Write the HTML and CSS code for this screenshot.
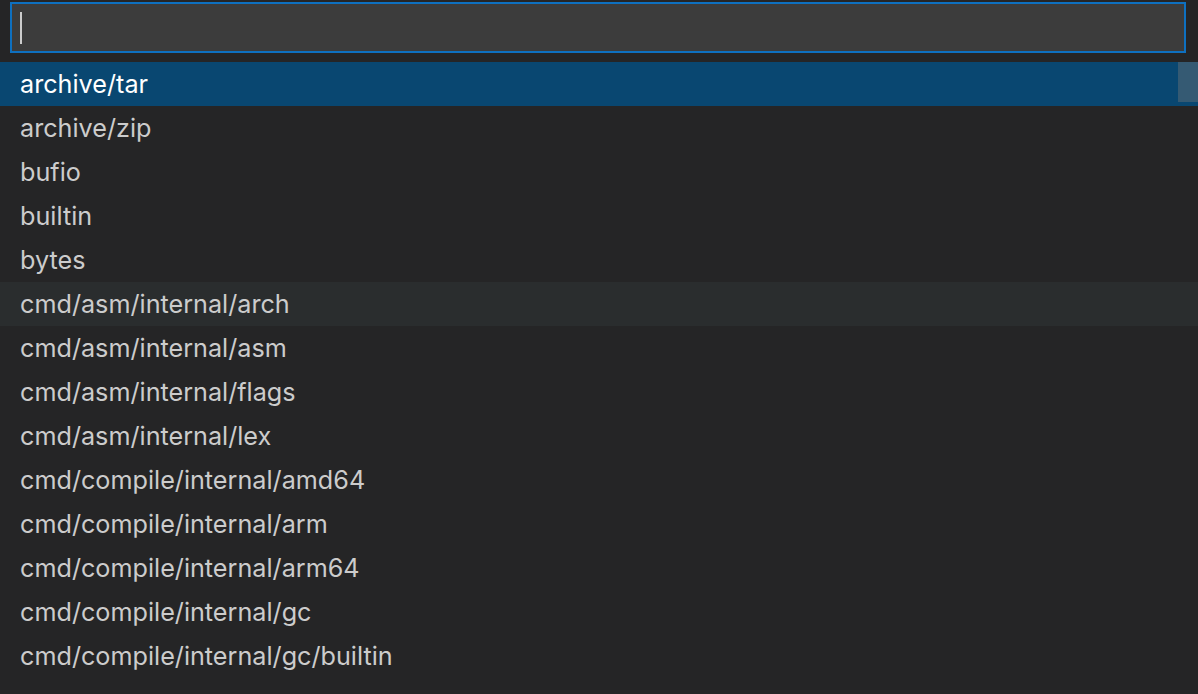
FILE: index.html
```html
<!DOCTYPE html>
<html>
<head>
<meta charset="utf-8">
<link rel="stylesheet" href="styles.css">
</head>
<body>
<div class="picker">
  <div class="input-wrap">
    <div class="input"><span class="caret"></span></div>
  </div>
  <div class="list">
    <div class="row selected">archive/tar</div>
    <div class="row">archive/zip</div>
    <div class="row">bufio</div>
    <div class="row">builtin</div>
    <div class="row">bytes</div>
    <div class="row hover">cmd/asm/internal/arch</div>
    <div class="row">cmd/asm/internal/asm</div>
    <div class="row">cmd/asm/internal/flags</div>
    <div class="row">cmd/asm/internal/lex</div>
    <div class="row">cmd/compile/internal/amd64</div>
    <div class="row">cmd/compile/internal/arm</div>
    <div class="row">cmd/compile/internal/arm64</div>
    <div class="row">cmd/compile/internal/gc</div>
    <div class="row">cmd/compile/internal/gc/builtin</div>
    <div class="scrollbar"></div>
  </div>
</div>
</body>
</html>
```
FILE: styles.css
```css
html, body {
  margin: 0;
  padding: 0;
  background: #252526;
  width: 1198px;
  height: 694px;
  overflow: hidden;
}
.picker {
  font-family: Inter, "Noto Sans", sans-serif;
  font-size: 25.2px;
  color: #cccccc;
}
.input-wrap {
  padding: 2px 12px 0 10px;
}
.input {
  height: 47px;
  border: 2px solid #0e70c0;
  background: #3c3c3c;
  display: flex;
  align-items: center;
  padding-left: 8px;
}
.caret {
  width: 2px;
  height: 32px;
  background: #cccccc;
}
.list {
  position: relative;
  margin-top: 9px;
}
.row {
  height: 44px;
  line-height: 44px;
  padding-left: 20px;
  white-space: nowrap;
  overflow: hidden;
}
.row::before {
  content: "";
  display: inline-block;
  height: 1px;
  vertical-align: -1px;
}
.row.selected {
  background: #094771;
  color: #ffffff;
}
.row.hover {
  background: #2a2d2e;
}
.scrollbar {
  position: absolute;
  right: 0;
  top: 0;
  width: 20px;
  height: 40px;
  background: rgba(121, 121, 121, 0.4);
}
```
